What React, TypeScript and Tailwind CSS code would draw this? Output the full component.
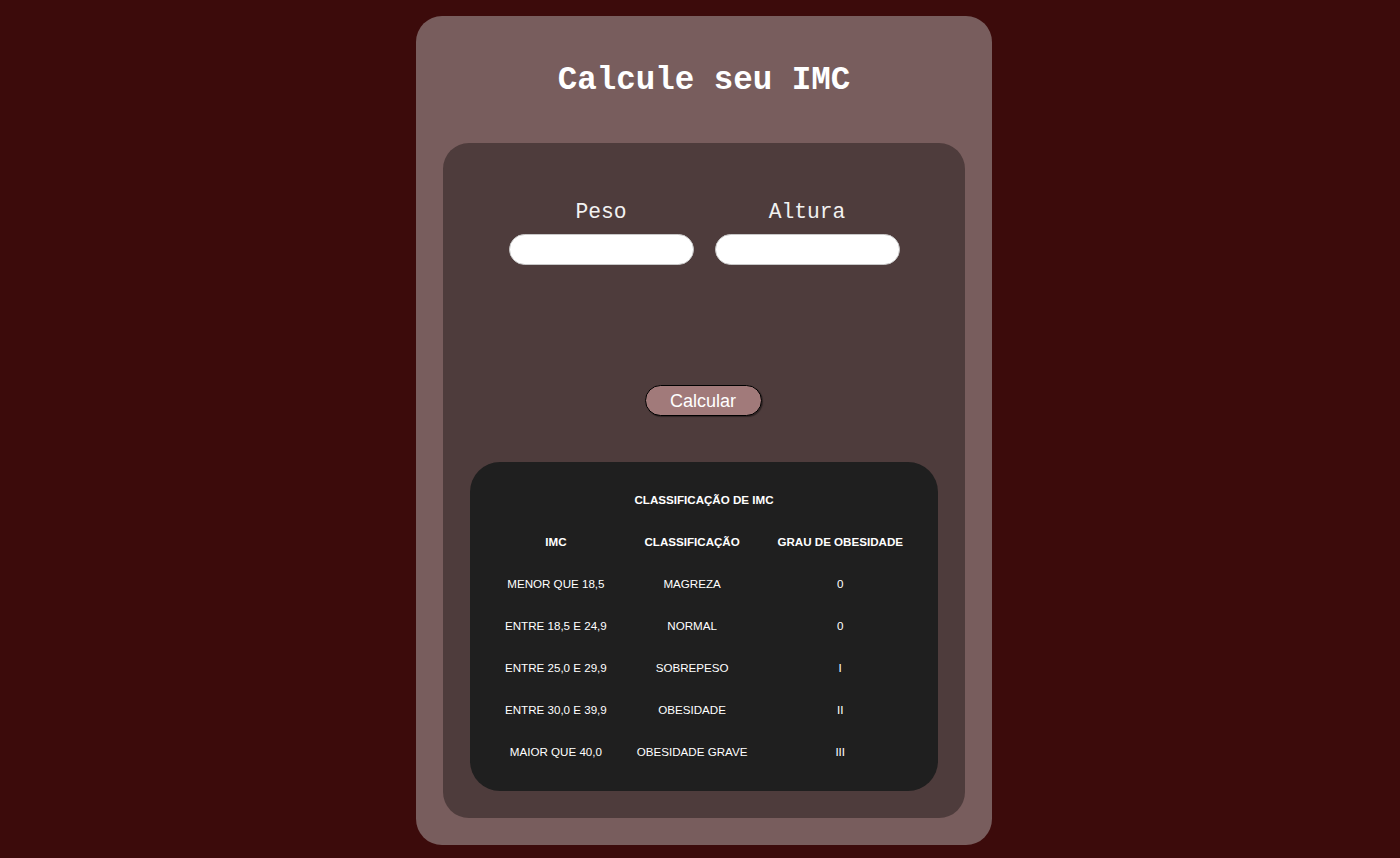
import React from "react";

const rows = [
  ["MENOR QUE 18,5", "MAGREZA", "0"],
  ["ENTRE 18,5 E 24,9", "NORMAL", "0"],
  ["ENTRE 25,0 E 29,9", "SOBREPESO", "I"],
  ["ENTRE 30,0 E 39,9", "OBESIDADE", "II"],
  ["MAIOR QUE 40,0", "OBESIDADE GRAVE", "III"],
];

export default function App() {
  return (
    <div className="min-h-[858px] w-full bg-[#3c0b0b] flex justify-center pt-[16px] pb-[13px] pl-[8px]">
      <div className="w-[576px] bg-[#785d5d] rounded-[26px] px-[27px] pb-[27px] flex flex-col">
        <h1
          className="text-white text-[32.5px] font-bold text-center h-[127px] flex items-center justify-center pt-[3px]"
          style={{ fontFamily: '"Liberation Mono", "Courier New", monospace' }}
        >
          Calcule seu IMC
        </h1>
        <div className="bg-[#4e3c3c] rounded-[26px] px-[27px] pb-[27px] flex flex-col items-center">
          <div className="flex gap-[21px] mt-[54px]">
            {["Peso", "Altura"].map((l) => (
              <div key={l} className="flex flex-col items-center">
                <label
                  className="text-[#f2f2f2] text-[21.3px] leading-[26px] h-[26px] pt-[2px]"
                  style={{ fontFamily: '"Liberation Mono", "Courier New", monospace' }}
                >
                  {l}
                </label>
                <input
                  type="text"
                  className="mt-[11px] w-[185px] h-[31px] bg-white rounded-full border border-[#c8c8c8] outline-none"
                />
              </div>
            ))}
          </div>
          <button
            className="mt-[120px] w-[117px] h-[31px] rounded-full bg-[#a17a7a] border border-black text-white text-[18px] leading-none shadow-[1px_1px_1px_rgba(0,0,0,0.4)] -ml-[2px]"
            style={{ fontFamily: '"Liberation Sans", Arial, sans-serif' }}
          >
            Calcular
          </button>
          <div
            className="mt-[46px] w-[468px] h-[329px] bg-[#1f1f1f] rounded-[30px] flex justify-center pt-[17px]"
            style={{ fontFamily: '"Liberation Sans", Arial, sans-serif' }}
          >
            <table className="text-white text-[11.6px] leading-[14px] border-collapse h-fit">
              <caption className="font-bold py-[14px]">CLASSIFICAÇÃO DE IMC</caption>
              <thead>
                <tr>
                  <th className="px-[15px] py-[14px] font-bold">IMC</th>
                  <th className="px-[15px] py-[14px] font-bold">CLASSIFICAÇÃO</th>
                  <th className="px-[15px] py-[14px] font-bold">GRAU DE OBESIDADE</th>
                </tr>
              </thead>
              <tbody>
                {rows.map((r) => (
                  <tr key={r[0]}>
                    {r.map((c, i) => (
                      <td key={i} className="px-[15px] py-[14px] text-center whitespace-nowrap">
                        {c}
                      </td>
                    ))}
                  </tr>
                ))}
              </tbody>
            </table>
          </div>
        </div>
      </div>
    </div>
  );
}
